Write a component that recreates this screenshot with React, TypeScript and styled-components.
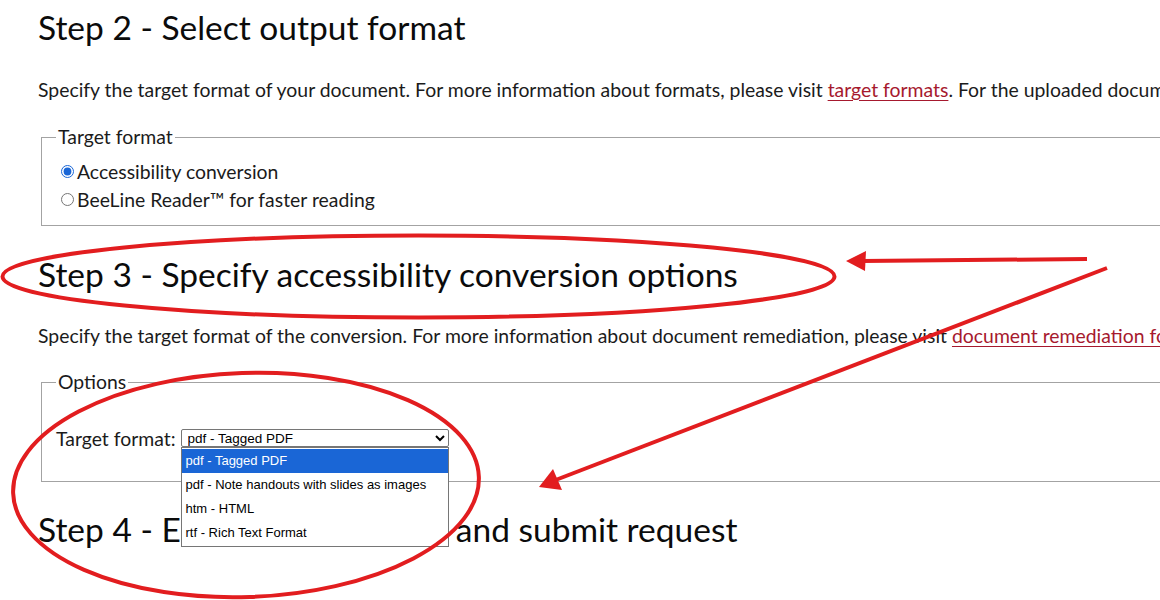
import React from 'react'
import styled, { createGlobalStyle } from 'styled-components'

const GlobalStyle = createGlobalStyle`
  html, body {
    margin: 0;
    padding: 0;
    background: #fff;
    overflow: hidden;
  }
  body {
    width: 1160px;
    height: 600px;
    font-family: Lato, "Open Sans", sans-serif;
    color: #1b1b1b;
  }
`

const Page = styled.main`
  position: relative;
  width: 1400px;
  height: 600px;
  padding: 7px 0 0 38px;
  box-sizing: border-box;
`

const StepTitle = styled.h2<{ $gap?: number }>`
  margin: ${p => p.$gap ?? 0}px 0 0;
  font-family: Lato, sans-serif;
  font-weight: 400;
  font-size: 33.5px;
  line-height: 40px;
  color: #0b0b0b;
  white-space: nowrap;
`

const Intro = styled.p<{ $gap: number }>`
  margin: ${p => p.$gap}px 0 0;
  font-size: 19.4px;
  line-height: 28px;
  white-space: nowrap;
`

const DocLink = styled.a`
  color: #a6192e;
  text-decoration: underline;
  text-underline-offset: 3px;
`

const Group = styled.fieldset<{ $gap: number; $top: number; $bottom: number }>`
  margin: ${p => p.$gap}px 0 0 3px;
  padding: ${p => p.$top}px 14px ${p => p.$bottom}px;
  border: 1px solid #a3a3a3;
  font-size: 19.4px;
  min-width: 0;
`

const Legend = styled.legend`
  padding: 0 2px;
  font-size: 19.4px;
  line-height: 24px;
  color: #1b1b1b;
`

const RadioRow = styled.label`
  display: flex;
  align-items: center;
  height: 28px;
  font-size: 19.4px;
`

const Radio = styled.input`
  width: 13px;
  height: 13px;
  margin: 0 3px 0 5px;
  accent-color: #1a66d6;
`

const FieldRow = styled.div`
  display: flex;
  align-items: center;
  height: 28px;
  font-size: 19.4px;
`

const FieldLabel = styled.span`
  margin-right: 5px;
`

const SelectWrap = styled.span`
  position: relative;
  display: inline-block;
`

const Select = styled.select`
  width: 268px;
  height: 18px;
  padding: 0 0 0 2px;
  border: 1px solid #767676;
  border-radius: 2px;
  font-family: "Liberation Sans", Arial, sans-serif;
  font-size: 13.5px;
  color: #000;
  background: #fff;
  display: block;
`

const OptionList = styled.ul`
  position: absolute;
  top: 18px;
  left: 0;
  z-index: 5;
  width: 268px;
  margin: 0;
  padding: 1px 0;
  list-style: none;
  box-sizing: border-box;
  border: 1px solid #767676;
  background: #fff;
  font-family: "Liberation Sans", Arial, sans-serif;
  font-size: 13px;
`

const OptionItem = styled.li<{ $active?: boolean }>`
  height: 24px;
  line-height: 24px;
  padding-left: 4px;
  white-space: nowrap;
  color: ${p => (p.$active ? '#fff' : '#000')};
  background: ${p => (p.$active ? '#1a66d6' : 'transparent')};
`

const Marks = styled.svg`
  position: absolute;
  top: 0;
  left: 0;
  z-index: 10;
  pointer-events: none;
`

const formats = [
  'pdf - Tagged PDF',
  'pdf - Note handouts with slides as images',
  'htm - HTML',
  'rtf - Rich Text Format',
]

const Annotations = () => (
  <Marks width="1160" height="600" viewBox="0 0 1160 600">
    <g fill="none" stroke="#e21d1f" strokeWidth="4">
      <ellipse cx="418.5" cy="276.5" rx="416" ry="41" />
      <ellipse cx="246" cy="485" rx="233" ry="112" transform="rotate(-2 246 485)" />
      <line x1="1087" y1="259" x2="862" y2="261" />
      <line x1="1107" y1="268" x2="553" y2="481" />
    </g>
    <g fill="#e21d1f">
      <polygon points="846,261 866,251 865,271" />
      <polygon points="539,487 553,469 562,490" />
    </g>
  </Marks>
)

export default function App() {
  return (
    <>
      <GlobalStyle />
      <Page>
        <StepTitle>Step 2 - Select output format</StepTitle>
        <Intro $gap={29}>
          Specify the target format of your document. For more information about formats, please visit{' '}
          <DocLink href="#">target formats</DocLink>. For the uploaded document
        </Intro>
        <Group $gap={21} $top={8} $bottom={12}>
          <Legend>Target format</Legend>
          <RadioRow>
            <Radio type="radio" name="target" defaultChecked />
            Accessibility conversion
          </RadioRow>
          <RadioRow>
            <Radio type="radio" name="target" />
            BeeLine Reader™ for faster reading
          </RadioRow>
        </Group>

        <StepTitle $gap={28}>Step 3 - Specify accessibility conversion options</StepTitle>
        <Intro $gap={28}>
          Specify the target format of the conversion. For more information about document remediation, please visit{' '}
          <DocLink href="#">document remediation formats</DocLink>.
        </Intro>
        <Group $gap={20} $top={30} $bottom={29}>
          <Legend>Options</Legend>
          <FieldRow>
            <FieldLabel>Target format:</FieldLabel>
            <SelectWrap>
              <Select defaultValue={formats[0]}>
                {formats.map(f => (
                  <option key={f}>{f}</option>
                ))}
              </Select>
              <OptionList>
                {formats.map((f, i) => (
                  <OptionItem key={f} $active={i === 0}>{f}</OptionItem>
                ))}
              </OptionList>
            </SelectWrap>
          </FieldRow>
        </Group>

        <StepTitle $gap={27}>Step 4 - Enter email address and submit request</StepTitle>
        <Annotations />
      </Page>
    </>
  )
}
